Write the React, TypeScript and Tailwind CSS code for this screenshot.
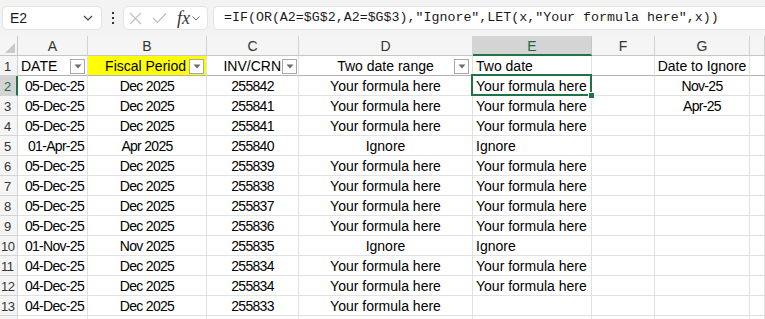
import React from "react";

type Row = [string, string, string, string, string, string];

const YFH = "Your formula here";

const rows: Row[] = [
  ["05-Dec-25", "Dec 2025", "255842", YFH, YFH, "Nov-25"],
  ["05-Dec-25", "Dec 2025", "255841", YFH, YFH, "Apr-25"],
  ["05-Dec-25", "Dec 2025", "255841", YFH, YFH, ""],
  ["01-Apr-25", "Apr 2025", "255840", "Ignore", "Ignore", ""],
  ["05-Dec-25", "Dec 2025", "255839", YFH, YFH, ""],
  ["05-Dec-25", "Dec 2025", "255838", YFH, YFH, ""],
  ["05-Dec-25", "Dec 2025", "255837", YFH, YFH, ""],
  ["05-Dec-25", "Dec 2025", "255836", YFH, YFH, ""],
  ["01-Nov-25", "Nov 2025", "255835", "Ignore", "Ignore", ""],
  ["04-Dec-25", "Dec 2025", "255834", YFH, YFH, ""],
  ["04-Dec-25", "Dec 2025", "255834", YFH, YFH, ""],
  ["04-Dec-25", "Dec 2025", "255833", YFH, "", ""],
];

const cols = ["A", "B", "C", "D", "E", "F", "G", ""];

const FilterBtn = () => (
  <span className="w-[15px] h-[15px] shrink-0 border border-[#a8a8a8] bg-white flex items-center justify-center">
    <svg width="8" height="5" viewBox="0 0 8 5">
      <path d="M0.5 0.5 L7.5 0.5 L4 4.5 Z" fill="#6b6b6b" />
    </svg>
  </span>
);

// every grid cell: 20px tall, light gridline right + bottom
const cell =
  "h-[20px] border-r border-b border-[#e1e1e1] text-[14px] whitespace-nowrap overflow-hidden flex items-center pt-[2px]";
const num = "tracking-[-0.7px]";

const Toolbar = () => (
  <div className="h-[36px] bg-[#f3f3f3] flex items-center pl-[2px]">
    <div className="w-[100px] h-[24px] bg-white border border-[#e3e3e3] rounded-[5px] flex items-center justify-between pl-[7px] pr-[8px]">
      <span className="text-[14px] text-[#1a1a1a]">E2</span>
      <svg width="10" height="6" viewBox="0 0 10 6">
        <path d="M1 1 L5 5 L9 1" fill="none" stroke="#444" strokeWidth="1.2" />
      </svg>
    </div>
    <div className="w-[21px] flex flex-col items-center justify-center gap-[3px]">
      <span className="w-[2px] h-[2px] bg-[#333]" />
      <span className="w-[2px] h-[2px] bg-[#333]" />
      <span className="w-[2px] h-[2px] bg-[#333]" />
    </div>
    <div className="w-[85px] h-[24px] bg-white border border-[#e3e3e3] rounded-[5px] flex items-center pl-[5px] gap-[10px]">
      <svg width="13" height="13" viewBox="0 0 13 13">
        <path d="M1 1 L12 12 M12 1 L1 12" stroke="#bdbdbd" strokeWidth="1.1" />
      </svg>
      <svg width="15" height="12" viewBox="0 0 15 12">
        <path d="M1 6 L5.5 10.5 L14 1.5" fill="none" stroke="#bdbdbd" strokeWidth="1.1" />
      </svg>
      <span className="flex items-center gap-[2px]">
        <span
          className="italic text-[18px] leading-none text-[#333]"
          style={{ fontFamily: '"Liberation Serif", serif' }}
        >
          fx
        </span>
        <svg width="8" height="5" viewBox="0 0 8 5">
          <path d="M0.5 0.5 L4 4 L7.5 0.5" fill="none" stroke="#666" strokeWidth="1" />
        </svg>
      </span>
    </div>
    <div className="ml-[5px] flex-1 h-[24px] bg-white border border-[#e3e3e3] rounded-l-[5px] border-r-0 flex items-center pl-[10px]">
      <span
        className="text-[13.3px] text-[#1a1a1a] whitespace-nowrap"
        style={{ fontFamily: '"Liberation Mono", monospace' }}
      >
        =IF(OR(A2=$G$2,A2=$G$3),"Ignore",LET(x,"Your formula here",x))
      </span>
    </div>
  </div>
);

export default function App() {
  return (
    <div
      className="w-[765px] h-[319px] overflow-hidden bg-white text-black"
      style={{ fontFamily: '"Liberation Sans", Arial, sans-serif' }}
    >
      <Toolbar />
      <div className="grid grid-cols-[18px_70px_119px_92px_174px_119px_63px_95px_1fr]">
        {/* column headers */}
        <div className="h-[20px] bg-[#f5f5f5] border-r border-b border-[#c6c6c6] relative">
          <svg className="absolute right-[2px] bottom-[2px]" width="10" height="10" viewBox="0 0 10 10">
            <path d="M10 0 L10 10 L0 10 Z" fill="#c9c9c9" />
          </svg>
        </div>
        {cols.map((c, i) => (
          <div
            key={i}
            className={
              c === "E"
                ? "h-[20px] bg-[#d4d4d4] border-r border-[#c6c6c6] border-b-2 border-b-[#217346] text-center text-[14px] leading-[20px] text-[#1e6b3f]"
                : "h-[20px] bg-[#f5f5f5] border-r border-b border-[#d3d3d3] border-b-[#c6c6c6] text-center text-[14px] leading-[21px] text-[#333]"
            }
          >
            {c}
          </div>
        ))}

        {/* row 1 - table header */}
        <div className="h-[20px] bg-[#f5f5f5] border-r border-b border-[#d3d3d3] text-[13px] leading-[21px] pl-[4px] text-[#333]">
          1
        </div>
        <div className={`${cell} border-b-[#b4b4b4] justify-between pl-[3px] pr-[2px]`}>
          <span>DATE</span>
          <FilterBtn />
        </div>
        <div className={`${cell} border-b-[#b4b4b4] bg-[#ffff00] justify-end gap-[3px] pr-[2px]`}>
          <span>Fiscal Period</span>
          <FilterBtn />
        </div>
        <div className={`${cell} border-b-[#b4b4b4] justify-end gap-[1px] pr-[1px]`}>
          <span>INV/CRN</span>
          <FilterBtn />
        </div>
        <div className={`${cell} border-b-[#b4b4b4] pr-[3px]`}>
          <span className="flex-1 text-center pl-[18px]">Two date range</span>
          <FilterBtn />
        </div>
        <div className={`${cell} border-b-[#b4b4b4] pl-[3px]`}>Two date</div>
        <div className={`${cell} border-b-[#b4b4b4]`} />
        <div className={`${cell} border-b-[#b4b4b4] justify-center`}>Date to Ignore</div>
        <div className={`${cell} border-b-[#b4b4b4]`} />

        {rows.map((r, i) => {
          const n = i + 2;
          const sel = n === 2;
          return (
            <React.Fragment key={n}>
              <div
                className={
                  sel
                    ? "h-[20px] bg-[#d4d4d4] border-r-2 border-r-[#217346] border-b border-b-[#d3d3d3] text-[13px] leading-[21px] pl-[4px] text-[#1e6b3f]"
                    : `h-[20px] bg-[#f5f5f5] border-r border-b border-[#d3d3d3] text-[13px] leading-[21px] text-[#333] ${
                        n < 10 ? "pl-[4px]" : "pl-[1px] tracking-[-0.5px]"
                      }`
                }
              >
                {n}
              </div>
              <div className={`${cell} ${num} justify-end pr-[3px]`}>{r[0]}</div>
              <div className={`${cell} ${num} justify-center`}>{r[1]}</div>
              <div className={`${cell} ${num} justify-center`}>{r[2]}</div>
              <div className={`${cell} justify-center`}>{r[3]}</div>
              <div className={`${cell} pl-[3px] ${sel ? "relative overflow-visible" : ""}`}>
                {r[4]}
                {sel && (
                  <>
                    <span className="absolute -left-[2px] -top-[2px] right-[-1px] bottom-[-1px] border-2 border-[#217346]" />
                    <span className="absolute right-[-4px] bottom-[-4px] w-[7px] h-[7px] bg-[#217346] border border-white" />
                  </>
                )}
              </div>
              <div className={cell} />
              <div className={`${cell} ${num} justify-center`}>{r[5]}</div>
              <div className={cell} />
            </React.Fragment>
          );
        })}

        {/* row 14, only its top edge shows */}
        <div className="h-[20px] bg-[#f5f5f5] border-r border-[#d3d3d3]" />
        {[0, 1, 2, 3, 4, 5, 6, 7].map((k) => (
          <div key={k} className="h-[20px] border-r border-[#e1e1e1]" />
        ))}
      </div>
    </div>
  );
}
